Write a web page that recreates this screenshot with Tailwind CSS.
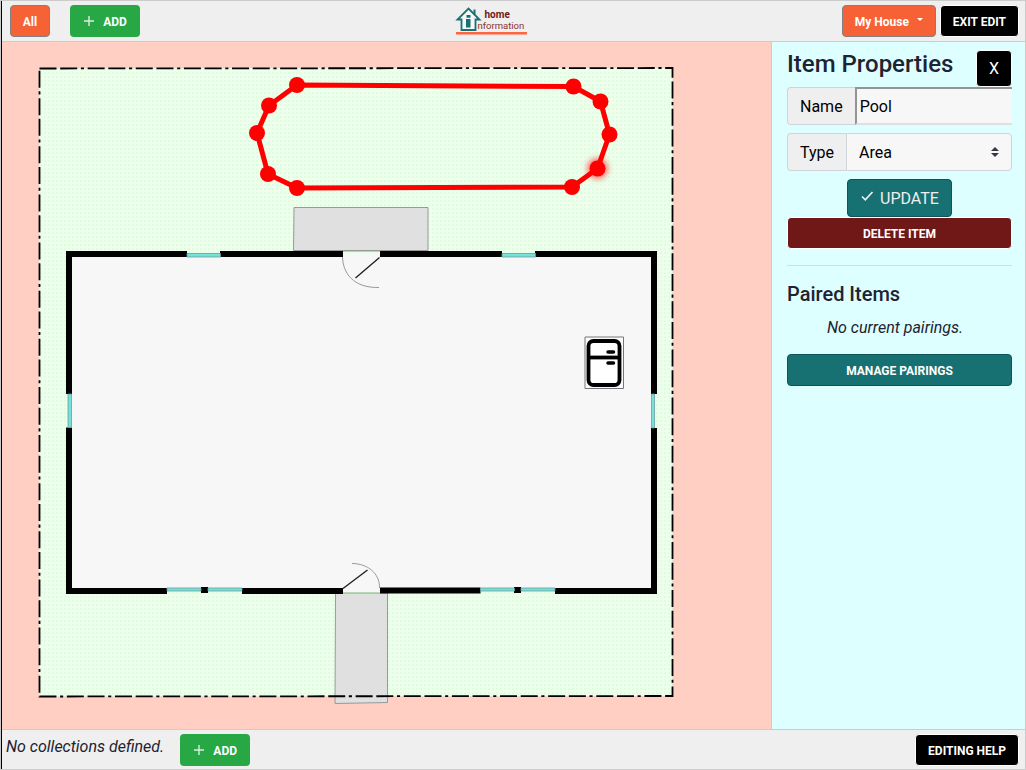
<!DOCTYPE html>
<html lang="en">
<head>
<meta charset="utf-8">
<meta name="viewport" content="width=device-width, initial-scale=1">
<title>Home Information</title>
<script src="https://cdn.jsdelivr.net/npm/@tailwindcss/browser@4"></script>
</head>
<body class="flex h-screen flex-col overflow-hidden border border-[#ccc] font-[Roboto,sans-serif] text-base text-[#212231]">
<div class="flex min-h-0 grow flex-col border-l border-black">
  <header class="flex h-[41px] shrink-0 items-center justify-between border-b border-[#ccc] bg-[#efefef] pr-[6px] pl-2">
    <div class="flex gap-5">
      <button class="h-8 w-10 rounded border border-[#808080] bg-[#f66136] pt-0.5 text-xs font-bold text-white">All</button>
      <button class="flex h-8 w-[70px] items-center justify-center gap-2 rounded bg-[#28a745] pt-0.5 text-xs font-bold text-white">
        <svg class="mb-0.5 size-3" viewBox="0 0 12 12" fill="none" stroke="#d8f0dd" stroke-width="1.4" aria-hidden="true"><path d="M6 1v10M1 6h10"/></svg>ADD
      </button>
    </div>
    <a href="#" aria-label="Home Information" class="shrink-0">
      <svg class="h-7 w-[72px]" viewBox="455 6 72 28" role="img">
        <g fill="none" stroke="#177071" stroke-width="1.8">
          <path d="M461.500 29V18.500H457.500L468.500 7.500L479.500 18.500H475.500V29Z" fill="#f7f7f7"/>
          <path d="M474.500 8.500v5" stroke-width="2"/>
        </g>
        <path d="M466.500 14h4v2.800h-4zM466 18h4.500v8.500H466z" fill="#177071"/>
        <rect x="456" y="31" width="71" height="2.500" fill="#ff643f"/>
        <text x="484.500" y="17" font-family="Roboto,sans-serif" font-size="10" font-weight="700" fill="#701818">home</text>
        <text x="477.500" y="28" font-family="Roboto,sans-serif" font-size="9.500" fill="#8a3328">nformation</text>
      </svg>
    </a>
    <div class="flex gap-1">
      <button class="flex h-8 items-center gap-2 rounded border border-[#808080] bg-[#f66136] px-3 pt-0.5 text-xs font-bold text-white">My House
        <svg class="mb-1 h-1 w-1.5" viewBox="0 0 6 4" fill="white" aria-hidden="true"><path d="M0 0h6L3 3z"/></svg>
      </button>
      <button class="h-8 rounded border border-white bg-black px-3 pt-0.5 text-xs font-bold text-white">EXIT EDIT</button>
    </div>
  </header>

  <div class="flex min-h-0 grow">
    <main class="min-w-0 grow bg-[#ffcfc4]">
      <svg class="h-full w-full" viewBox="2 42 769 687" role="img" aria-label="Floor plan">
        <defs>
          <pattern id="grass" width="4" height="4" patternUnits="userSpaceOnUse"><path d="M0 0h4v4H0z" fill="#edffec"/><path d="M0 0h2v2H0z" fill="#defede"/></pattern>
          <pattern id="paving" width="3" height="3" patternUnits="userSpaceOnUse"><path d="M0 0h3v3H0z" fill="#e2e2e2"/><path d="M0 0l3 3" stroke="#d9d9d9" stroke-width=".8"/></pattern>
          <filter id="glow" x="-1" y="-1" width="3" height="3"><feGaussianBlur stdDeviation="3"/></filter>
        </defs>
        <path d="M39.500 68.500L672.500 68V696L39.500 696.500Z" fill="url(#grass)"/>
        <path d="M68 253H655V591H68Z" fill="#f7f7f7"/>
        <g fill="url(#paving)" stroke="#999" stroke-width="1">
          <path d="M294 207.500L428 207.500V250.500H293.500Z"/>
          <path d="M335.500 593H387.500V702.500L335 703.500Z"/>
        </g>
        <path d="M39.500 68.500L672.500 68V696L39.500 696.500Z" fill="none" stroke="#000" stroke-width="1.800" stroke-dasharray="17 3.700 17 3.700 3.100 3.630"/>
        <g fill="none" stroke="#000" stroke-width="6">
          <path d="M187 254H69V394"/>
          <path d="M220 254H343M380 254H502M535 254H654V394"/>
          <path d="M69 427.500V591H167M242 591H343M380 590.500H480.500M555 591H654V428"/>
          <path d="M201 590H208M514 590H521"/>
        </g>
        <g fill="#76e0da" stroke="#6b9d9b" stroke-width=".8">
          <path d="M187 253.500h33.500v3.500H187zM502 253.500h33.500v3.500H502z"/>
          <path d="M68 394h3.500v33.500H68zM651.500 394h3v34h-3z"/>
          <path d="M167 588h34v3h-34zM208 588h34v3h-34zM480.500 588h34v3h-34zM521 588h34v3h-34z"/>
        </g>
        <g fill="none" stroke="#999" stroke-width="1">
          <path d="M343 251.500H380M343 592.500H380" stroke="#b6d8b6"/>
          <path d="M342.500 257C343 273 353 288 379 287.500"/>
          <path d="M352 563.500C367 563.500 380 573 379.500 588"/>
        </g>
        <path d="M379.500 257.500L355.500 278M343 588.500L367.500 570" stroke="#222" stroke-width="1.400"/>
        <g>
          <path d="M585 337h38.500v51.500H585z" fill="#fafafa" stroke="#77747f" stroke-width="1"/>
          <rect x="588.500" y="341" width="31" height="44" rx="5" fill="#fff" stroke="#000" stroke-width="3.800"/>
          <path d="M588 357.500h32" stroke="#000" stroke-width="3.800"/>
          <path d="M608 352h5.500M608 363h5.500" stroke="#000" stroke-width="3.500" stroke-linecap="round"/>
        </g>
        <circle cx="597.500" cy="168.500" r="10" fill="#ff3030" opacity=".8" filter="url(#glow)"/>
        <path d="M297 85L573.500 86.500L600.500 101.500L609.500 134.500L597.500 168.500L572 187L297 188L268 174L257 133L269 105.500Z" fill="none" stroke="red" stroke-width="5"/>
        <g fill="red">
          <circle cx="297" cy="85" r="8"/><circle cx="573.500" cy="86.500" r="8"/>
          <circle cx="600.500" cy="101.500" r="8"/><circle cx="609.500" cy="134.500" r="8"/>
          <circle cx="597.500" cy="168.500" r="8"/><circle cx="572" cy="187" r="8"/>
          <circle cx="297" cy="188" r="8"/><circle cx="268" cy="174" r="8"/>
          <circle cx="257" cy="133" r="8"/><circle cx="269" cy="105.500" r="8"/>
        </g>
      </svg>
    </main>

    <aside class="w-[254px] shrink-0 border-l border-[#ccc] bg-[#dff] pt-2 pr-[13px] pl-[15px]">
      <div class="flex h-[37px] justify-between">
        <h1 class="text-2xl leading-7 font-medium">Item Properties</h1>
        <button class="h-[37px] w-9 rounded border border-white bg-black text-base text-white">X</button>
      </div>
      <form>
        <div class="mb-2 flex h-[38px]">
          <label for="name" class="flex items-center rounded-l border border-r-0 border-[#ced4da] bg-[#efefef] px-3 pt-0.5 text-black">Name</label>
          <input id="name" type="text" value="Pool" class="min-w-0 grow border-t-2 border-b-2 border-l-2 border-t-[#949494] border-b-[#e0e0e0] border-l-[#949494] bg-[#f7f7f7] px-[3px] pt-0.5 text-black outline-none">
        </div>
        <div class="mb-2 flex h-[38px]">
          <label for="type" class="flex items-center rounded-l border border-r-0 border-[#ced4da] bg-[#efefef] px-3 pt-0.5 text-black">Type</label>
          <div class="relative min-w-0 grow">
            <select id="type" class="h-full w-full appearance-none rounded-r border border-[#ced4da] bg-[#f7f7f7] px-3 pt-0.5 text-black"><option>Area</option></select>
            <svg class="pointer-events-none absolute top-3.5 right-[13px] h-2.5 w-2" viewBox="0 0 8 10" fill="#343a40" aria-hidden="true"><path d="M0 4h8L4 0zM0 6h8L4 10z"/></svg>
          </div>
        </div>
        <button type="button" class="mx-auto flex h-[38px] w-[105px] items-center justify-center gap-1.5 rounded border border-[#0d5556] bg-[#177071] pt-0.5 text-base text-[#efefef]">
          <svg class="mb-1.5 size-3.5" viewBox="0 0 14 14" fill="none" stroke="currentColor" stroke-width="1.700" aria-hidden="true"><path d="M2 7.500l3.300 3.300L12.500 3"/></svg>UPDATE
        </button>
        <button type="button" class="block h-8 w-full rounded border border-white bg-[#701818] pt-0.5 text-xs font-bold text-white">DELETE ITEM</button>
      </form>
      <hr class="mt-4 border-[#c5e3e4]">
      <h2 class="mt-4 text-xl leading-6 font-medium">Paired Items</h2>
      <p class="mt-2 pt-0.5 pl-10 leading-6 italic">No current pairings.</p>
      <button class="mt-3.5 h-8 w-full rounded border border-[#0d5556] bg-[#177071] pt-0.5 text-xs font-bold text-white">MANAGE PAIRINGS</button>
    </aside>
  </div>

  <footer class="flex h-10 shrink-0 items-center border-t border-[#ccc] bg-[#efefef] pr-[6px] pl-1">
    <p class="pb-1.5 italic">No collections defined.</p>
    <button class="ml-4 flex h-8 w-[70px] items-center justify-center gap-2 rounded bg-[#28a745] pt-0.5 text-xs font-bold text-white">
      <svg class="mb-0.5 size-3" viewBox="0 0 12 12" fill="none" stroke="#d8f0dd" stroke-width="1.4" aria-hidden="true"><path d="M6 1v10M1 6h10"/></svg>ADD
    </button>
    <button class="ml-auto h-8 rounded border border-white bg-black px-3 pt-0.5 text-xs font-bold text-white">EDITING HELP</button>
  </footer>
</div>
</body>
</html>
